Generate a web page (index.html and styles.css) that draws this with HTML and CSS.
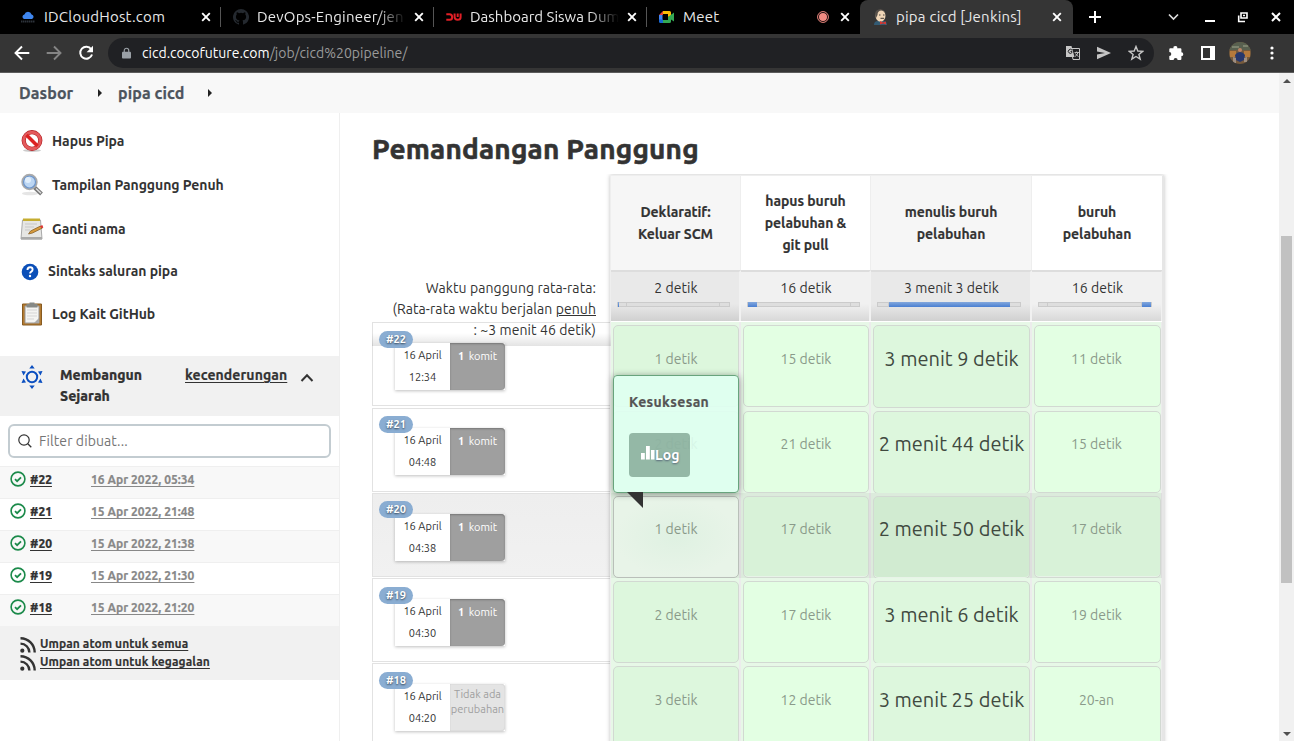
FILE: index.html
```html
<!DOCTYPE html>
<html lang="id">
<head>
<meta charset="utf-8">
<title>pipa cicd [Jenkins]</title>
<link rel="stylesheet" href="styles.css">
</head>
<body>
<svg class="defs" width="0" height="0">
  <symbol id="x" viewBox="0 0 10 10"><path d="M1.2 1.2l7.6 7.6M8.8 1.2L1.2 8.8" stroke="#fff" stroke-width="1.9" fill="none"/></symbol>
  <symbol id="ok" viewBox="0 0 16 16"><circle cx="8" cy="8" r="6.9" fill="none" stroke="#1b8a4a" stroke-width="1.6"/><path d="M5 8.2l2.1 2 3.900-3.900" fill="none" stroke="#1b8a4a" stroke-width="1.8"/></symbol>
  <symbol id="rss" viewBox="0 0 16 16"><circle cx="2.3" cy="13.7" r="2.1" fill="#333"/><path d="M.5 6.6A9 9 0 0 1 9.4 15.5M.5 1.3A14.2 14.2 0 0 1 14.7 15.5" fill="none" stroke="#333" stroke-width="2.4"/></symbol>
</svg>

<header class="tabs">
  <div class="tab">
    <svg class="fav" viewBox="0 0 16 16"><path d="M4 10a2.4 2.4 0 0 1 .4-4.6 3.8 3.8 0 0 1 7.2 0A2.4 2.4 0 0 1 12 10z" fill="#3f86ee"/><path d="M1 12.5h14" stroke="#2d333b" stroke-width="2" stroke-dasharray="1.5 .5"/></svg>
    <span class="tab-title t1">IDCloudHost.com</span><svg class="close"><use href="#x"/></svg>
  </div>
  <div class="tab">
    <svg class="fav" viewBox="0 0 16 16"><path fill="#24292f" d="M8 0a8 8 0 0 0-2.53 15.59c.4.07.55-.17.55-.38v-1.49c-2.23.48-2.7-.95-2.7-.95-.36-.92-.89-1.17-.89-1.17-.73-.5.05-.49.05-.49.81.06 1.23.83 1.23.83.72 1.23 1.88.87 2.34.67.07-.52.28-.88.51-1.08-1.78-.2-3.64-.89-3.64-3.95 0-.87.31-1.59.82-2.15-.08-.2-.36-1.02.08-2.12 0 0 .67-.21 2.2.82a7.6 7.6 0 0 1 4 0c1.53-1.04 2.2-.82 2.2-.82.44 1.1.16 1.92.08 2.12.51.56.82 1.27.82 2.15 0 3.07-1.87 3.75-3.65 3.95.29.25.54.73.54 1.48v2.2c0 .21.15.46.55.38A8 8 0 0 0 8 0z"/></svg>
    <span class="tab-title t2 fade">DevOps-Engineer/jen</span><svg class="close"><use href="#x"/></svg>
  </div>
  <div class="tab">
    <svg class="fav" viewBox="0 0 16 16"><path d="M.3 5.2h3.2a2.6 2.6 0 0 1 2.6 2.6v.8a2.2 2.2 0 0 1-2.2 2.2H.3M8.6 4.5v3.6c0 2 1 2.7 3 2.7s3-1 3-2.6V4.5M11.700 4.500V8" fill="none" stroke="#e01f26" stroke-width="2"/></svg>
    <span class="tab-title t3 fade">Dashboard Siswa Dum</span><svg class="close"><use href="#x"/></svg>
  </div>
  <div class="tab">
    <svg class="fav" viewBox="0 0 16 16"><path d="M0 6l4-4v4z" fill="#ea4335"/><path d="M4 2h6.500q1.500 0 1.500 1.500V7L9 8V5H4z" fill="#fbbc04"/><path d="M0 6h3.500v5H0z" fill="#4285f4"/><path d="M0 10.500h4V14H1.400Q0 14 0 12.500z" fill="#1967d2"/><path d="M4 11h5V8l6-4.600v9.200L12 10.500v2q0 1.500-1.500 1.500H4z" fill="#34a853"/></svg>
    <span class="tab-title t4">Meet</span>
    <svg class="rec" viewBox="0 0 12 12"><circle cx="6" cy="6" r="5.400" fill="none" stroke="#f28b82"/><circle cx="6" cy="6" r="4" fill="#f28b82"/></svg>
    <svg class="close"><use href="#x"/></svg>
  </div>
  <div class="tab active">
    <svg class="fav" viewBox="0 0 16 16"><path d="M1 16q0-4 4-4h5q4 0 4 4z" fill="#335b74"/><ellipse cx="7.500" cy="6.700" rx="5" ry="6" fill="#f0d6b7"/><path d="M3 9Q.5 2 5.500.5 11-.5 13 5q-2-3.500-4.500-3.500Q4.500 1.500 4.500 6z" fill="#554f49"/><path d="M6 6h1.500M10 6h1.500M7.500 9.300h3.500" stroke="#453e39" stroke-width="1"/><path d="M7 12l3 1.500 3-1v3l-3-1-3 1z" fill="#d33833"/></svg>
    <span class="tab-title t5">pipa cicd [Jenkins]</span><svg class="close"><use href="#x"/></svg>
  </div>
  <svg class="plus" viewBox="0 0 12 12"><path d="M6 0v12M0 6h12" stroke="#fff" stroke-width="2"/></svg>
  <div class="window-buttons">
    <svg width="12" height="12" viewBox="0 0 12 12"><path d="M1 3.500L5.500 8 10 3.500" fill="none" stroke="#ddd" stroke-width="1.700"/></svg>
    <svg width="12" height="12" viewBox="0 0 12 12"><path d="M3 10h10" stroke="#fff" stroke-width="2"/></svg>
    <svg width="12" height="12" viewBox="0 0 12 12"><path d="M5 2h6v5H5zM2.700 4.500v6H9" fill="none" stroke="#fff" stroke-width="1.600"/><path d="M7 3.800h2v1.500H7z" fill="#fff"/></svg>
    <svg width="12" height="12" viewBox="0 0 12 12"><path d="M2 2l8 8M10 2l-8 8" stroke="#fff" stroke-width="2"/></svg>
  </div>
</header>

<nav class="toolbar">
  <svg class="nav-icon" viewBox="0 0 16 16"><path d="M15.300 8H2M8 1.500L1.500 8 8 14.500" fill="none" stroke="#fff" stroke-width="1.900"/></svg>
  <svg class="nav-icon" viewBox="0 0 16 16"><path d="M.7 8H14M8 1.500L14.500 8 8 14.500" fill="none" stroke="#858585" stroke-width="1.900"/></svg>
  <svg class="nav-icon" viewBox="0 0 16 16"><path d="M13.200 4.300A6 6 0 1 0 14 9.500" fill="none" stroke="#fff" stroke-width="2"/><path d="M15 .8v6.400H8.600z" fill="#fff"/></svg>
  <div class="omnibox">
    <svg class="lock" viewBox="0 0 10 12"><path d="M1 4.500h8q1 0 1 1V11q0 1-1 1H1q-1 0-1-1V5.500q0-1 1-1z" fill="#9aa0a6"/><path d="M2.500 5V3.200a2.500 2.500 0 0 1 5 0V5" fill="none" stroke="#9aa0a6" stroke-width="1.300"/></svg>
    <span class="url">cicd.cocofuture.com<span>/job/cicd%20pipeline/</span></span>
    <svg width="14" height="14" viewBox="0 0 14 14"><path d="M5 2.500h8.500v11H7z" fill="none" stroke="#c7c7c7" stroke-width="1"/><path d="M0 0h5.500l3 11H0z" fill="#c7c7c7"/><path d="M6 4.200A2 2 0 1 0 6 6.500V5.600H4.500" fill="none" stroke="#202124" stroke-width="1"/><path d="M8.500 6.500H13M10.700 5.500v1M12 6.500q-1 3-3 4M9.500 7.500q1 2 3 3" fill="none" stroke="#c7c7c7" stroke-width=".9"/></svg>
    <svg width="14" height="14" viewBox="0 0 14 14"><path d="M0 .8L14 7 0 13.200V8.400L8 7 0 5.600z" fill="#c4c4c4"/></svg>
    <svg width="16" height="16" viewBox="0 0 16 16"><path d="M8 1.500l1.800 4.500 4.900.3-3.800 3.100 1.300 4.800L8 11.500l-4.200 2.700 1.300-4.800L1.300 6.300 6.200 6z" fill="none" stroke="#c7c7c7" stroke-width="1.400"/></svg>
  </div>
  <svg class="tool" viewBox="0 0 16 16"><path d="M2.300 3.300h3.200a1.900 1.900 0 1 1 3.700 0h3.200q1 0 1 1v3a1.900 1.900 0 1 1 0 3.800v3q0 1-1 1H9.600a2 2 0 1 0-4 0H2.300q-1 0-1-1V11a2 2 0 1 0 0-4V4.300q0-1 1-1z" fill="#fff"/></svg>
  <svg class="tool" viewBox="0 0 16 16"><path fill-rule="evenodd" d="M1 1h14v14H1zM3 3v10h7V3z" fill="#fff"/></svg>
  <svg class="avatar" viewBox="0 0 22 22"><clipPath id="round"><circle cx="11" cy="11" r="11"/></clipPath><g clip-path="url(#round)"><path d="M0 0h22v22H0z" fill="#765a3c"/><path d="M0 0h22v8H0z" fill="#58604f"/><path d="M3 4h7v2H3zM14 3h5v2h-5z" fill="#7c836e"/><path d="M1 9h6v6H1zM15 9h6v6h-6z" fill="#b5793c"/><circle cx="11" cy="8" r="2" fill="#bd8365"/><path d="M7 18l-1-5q2-3 5-3t5 3l-1 5-4 2z" fill="#26376d"/><path d="M4 15l3 1v5H4zM15 16l3-1v5h-3z" fill="#9d8d81"/></g></svg>
  <svg class="dots" viewBox="0 0 4 14"><circle cx="2" cy="2" r="1.600" fill="#fff"/><circle cx="2" cy="7" r="1.600" fill="#fff"/><circle cx="2" cy="12" r="1.600" fill="#fff"/></svg>
</nav>

<div class="viewport">
 <div class="page">
  <div class="breadcrumb"><span class="crumb c1">Dasbor</span><i></i><span class="crumb c2">pipa cicd</span><i></i></div>
  <div class="columns">
   <aside class="sidebar">
    <ul class="tasks">
      <li><svg width="24" height="24" viewBox="0 0 24 24"><ellipse cx="12" cy="21.500" rx="9" ry="1.500" fill="#ccc"/><circle cx="12" cy="11.500" r="8.300" fill="#fff" stroke="#b11e22" stroke-width="4.200"/><circle cx="12" cy="11.500" r="8.300" fill="none" stroke="#e35a5c" stroke-width="3"/><path d="M6.500 6l11 11" stroke="#d22" stroke-width="3.600"/></svg><span class="k1">Hapus Pipa</span></li>
      <li><svg width="24" height="24" viewBox="0 0 24 24"><ellipse cx="10" cy="20.500" rx="8" ry="1.800" fill="#e5e5e5"/><path d="M14 14l7.500 7" stroke="#777" stroke-width="4"/><path d="M16 15.500l5 4.800" stroke="#ddd" stroke-width="1.500"/><circle cx="9.500" cy="9" r="7.200" fill="#bcd6f3" stroke="#aaa" stroke-width="2"/><circle cx="9.500" cy="9" r="6" fill="none" stroke="#6d95cb" stroke-width="1.200"/><circle cx="8" cy="7" r="3" fill="#e1eefb"/></svg><span class="k2">Tampilan Panggung Penuh</span></li>
      <li><svg width="24" height="24" viewBox="0 0 24 24"><path d="M2.500 3h18l1.500 19H1z" fill="#e6e6e4" stroke="#aaa"/><path d="M1 20h21v2.500H1z" fill="#aaa"/><path d="M3 1.500h17V4H3z" fill="#c5ad31"/><path d="M5 7h12M5 10h9M5 13h5" stroke="#c7c7c7"/><path d="M8.500 17l2-3 10-5 2 2-10 5z" fill="#d69a3d" stroke="#80581f" stroke-width=".7"/><path d="M20 9.300l2.300-1.200 1 2.300-1.600.8z" fill="#d33"/></svg><span class="k3">Ganti nama</span></li>
      <li class="help"><svg width="18" height="18" viewBox="0 0 18 18"><circle cx="9" cy="9" r="8.300" fill="#0b4fb8"/><path d="M6.500 7q0-2.700 2.600-2.700 2.500 0 2.500 2.300 0 1.300-1.300 2-1.200.7-1.200 2" fill="none" stroke="#fff" stroke-width="1.900"/><circle cx="9" cy="13" r="1.200" fill="#fff"/></svg><span class="k4">Sintaks saluran pipa</span></li>
      <li><svg width="24" height="24" viewBox="0 0 24 24"><path d="M2.500 2h19v21h-19z" fill="#b47b30" stroke="#865a21"/><path d="M5 4h14v17H5z" fill="#f4f4f2" stroke="#999"/><path d="M7 8h10M7 11h10M7 14h10M7 17h7" stroke="#d5d5d5"/><path d="M6.500 2h3V.5h5V2h3v3.500h-11z" fill="#868986"/><path d="M19 16v5h-5z" fill="#aaa"/></svg><span class="k5">Log Kait GitHub</span></li>
    </ul>
    <section class="history">
      <div class="history-head">
        <svg width="24" height="24" viewBox="0 0 24 24"><circle cx="12" cy="12" r="5.200" fill="none" stroke="#0b4fc0" stroke-width="2"/><path d="M12 0l2.700 3.500H9.300zM12 24l2.700-3.500H9.300zM1.500 6l4.500.5-2.500 4zM22.500 6l-4.500.5 2.500 4zM1.500 18l4.500-.5-2.500-4zM22.500 18l-4.500-.5 2.500-4z" fill="#0b4fc0"/></svg>
        <strong>Membangun Sejarah</strong><a>kecenderungan</a>
        <svg class="chev" width="14" height="9" viewBox="0 0 14 9"><path d="M1.500 8L7 2.200 12.500 8" fill="none" stroke="#333" stroke-width="2"/></svg>
      </div>
      <div class="filter"><svg width="14" height="14" viewBox="0 0 14 14"><circle cx="6" cy="6" r="5.200" fill="none" stroke="#333" stroke-width="1.200"/><path d="M9.800 9.800l3.500 3.500" stroke="#333" stroke-width="1.300"/></svg><span>Filter dibuat...</span></div>
      <div class="build"><svg><use href="#ok"/></svg><b>#22</b><a>16 Apr 2022, 05:34</a></div>
      <div class="build"><svg><use href="#ok"/></svg><b>#21</b><a>15 Apr 2022, 21:48</a></div>
      <div class="build"><svg><use href="#ok"/></svg><b>#20</b><a>15 Apr 2022, 21:38</a></div>
      <div class="build"><svg><use href="#ok"/></svg><b>#19</b><a>15 Apr 2022, 21:30</a></div>
      <div class="build"><svg><use href="#ok"/></svg><b>#18</b><a>15 Apr 2022, 21:20</a></div>
      <div class="feeds">
        <div><svg><use href="#rss"/></svg><a>Umpan atom untuk semua</a></div>
        <div><svg><use href="#rss"/></svg><a class="f2">Umpan atom untuk kegagalan</a></div>
      </div>
    </section>
   </aside>
   <main class="content">
    <h1>Pemandangan Panggung</h1>
    <div class="stages">
      <div class="row head"><div></div><div class="th">Deklaratif:<br>Keluar SCM</div><div class="th">hapus buruh<br>pelabuhan &amp;<br>git pull</div><div class="th">menulis buruh<br>pelabuhan</div><div class="th">buruh<br>pelabuhan</div></div>
      <div class="row avg">
        <div class="avg-label"><p>Waktu panggung rata-rata:</p><p class="p2">(Rata-rata waktu berjalan <u>penuh</u></p><p class="p3">: ~3 menit 46 detik)</p></div>
        <div class="td"><span>2 detik</span><div class="bar"><i style="width:1%"></i><s style="width:7%"></s><s style="width:84%"></s></div></div>
        <div class="td"><span>16 detik</span><div class="bar"><i style="width:8%"></i><s style="width:85%"></s></div></div>
        <div class="td"><span>3 menit 3 detik</span><div class="bar"><s style="width:8%"></s><i style="width:85%"></i></div></div>
        <div class="td"><span>16 detik</span><div class="bar"><s style="width:8%"></s><s style="width:84%"></s><i style="width:8%"></i></div></div>
      </div>
      <div class="row run first"><div class="info"><span class="badge">#22</span><div class="meta"><div class="date">16 April<br>12:34</div><div class="commit"><b>1</b> komit</div></div></div><div class="td"><div class="card">1 detik</div></div><div class="td"><div class="card">15 detik</div></div><div class="td"><div class="card">3 menit 9 detik</div></div><div class="td"><div class="card">11 detik</div></div></div>
      <div class="row run second"><div class="info"><span class="badge">#21</span><div class="meta"><div class="date">16 April<br>04:48</div><div class="commit"><b>1</b> komit</div></div></div><div class="td"><div class="card">2 detik</div></div><div class="td"><div class="card">21 detik</div></div><div class="td"><div class="card">2 menit 44 detik</div></div><div class="td"><div class="card">15 detik</div></div></div>
      <div class="row run hover"><div class="info"><span class="badge">#20</span><div class="meta"><div class="date">16 April<br>04:38</div><div class="commit"><b>1</b> komit</div></div></div>
        <div class="td"><div class="card">1 detik</div>
          <div class="popup"><strong>Kesuksesan</strong><span class="log"><svg width="14" height="14" viewBox="0 0 14 14"><path d="M0 7h3.800v6.500H0zM5 0h3.800v13.500H5zM10 4h3.500v9.500H10z" fill="#fff"/></svg>Log</span></div>
        </div><div class="td"><div class="card">17 detik</div></div><div class="td"><div class="card">2 menit 50 detik</div></div><div class="td"><div class="card">17 detik</div></div></div>
      <div class="row run"><div class="info"><span class="badge">#19</span><div class="meta"><div class="date">16 April<br>04:30</div><div class="commit"><b>1</b> komit</div></div></div><div class="td"><div class="card">2 detik</div></div><div class="td"><div class="card">17 detik</div></div><div class="td"><div class="card">3 menit 6 detik</div></div><div class="td"><div class="card">19 detik</div></div></div>
      <div class="row run"><div class="info"><span class="badge">#18</span><div class="meta"><div class="date">16 April<br>04:20</div><div class="commit none">Tidak ada<br>perubahan</div></div></div><div class="td"><div class="card">3 detik</div></div><div class="td"><div class="card">12 detik</div></div><div class="td"><div class="card">3 menit 25 detik</div></div><div class="td"><div class="card">20-an</div></div></div>
    </div>
   </main>
  </div>
 </div>
 <div class="scrollbar"><i class="up"></i><div class="thumb"></div><i class="down"></i></div>
</div>
</body>
</html>
```
FILE: styles.css
```css
* { box-sizing: border-box; }
html, body { height: 100%; }
body { margin: 0; overflow: hidden; background: #fff; color: #333; font: 14px/22px Ubuntu, "Noto Sans", sans-serif; display: flex; flex-direction: column; white-space: nowrap; }
svg { flex: none; display: block; }
p, h1, ul { margin: 0; padding: 0; }
.defs { display: none; }

/* browser tabs */
.tabs { height: 34px; flex: none; background: #000; display: flex; align-items: center; padding-left: 8px; color: #e8e8e8; font-size: 15px; letter-spacing: .22px; }
.tab { width: 213px; height: 34px; display: flex; align-items: center; padding: 0 10px 0 12px; background: linear-gradient(#555, #555) right 7px / 1px 20px no-repeat; }
.tab:nth-child(4) { background: none; }
.tab.active { background: #353535; border-radius: 8px 8px 0 0; padding-left: 13px; padding-right: 11px; }
.fav { width: 16px; height: 16px; margin-right: 8px; }
.tab.active .fav { margin-right: 7px; }
.tab-title { flex: 1; overflow: hidden; }
.t2 { letter-spacing: .2px; }
.t3 { letter-spacing: 0; }
.fade { -webkit-mask-image: linear-gradient(90deg, #000 80%, transparent); mask-image: linear-gradient(90deg, #000 80%, transparent); margin-right: 8px; }
.close { width: 10px; height: 10px; }
.rec { width: 12px; height: 12px; margin-right: 11px; }
.plus { width: 12px; height: 12px; margin-left: 16px; }
.window-buttons { margin-left: auto; display: flex; gap: 22px; padding-right: 12px; }
.window-buttons svg { overflow: visible; }

/* address bar */
.toolbar { height: 39px; flex: none; background: #353535; border-bottom: 1px solid #5c5c5c; display: flex; align-items: center; padding-left: 14px; }
.nav-icon { width: 16px; height: 16px; margin-right: 16px; }
.nav-icon:nth-child(3) { margin-right: 14px; }
.omnibox { width: 1046px; height: 30px; border-radius: 15px; background: #202124; display: flex; align-items: center; gap: 17px; padding: 0 10px 0 14px; }
.lock { width: 9px; height: 12px; margin-right: -6px; }
.url { flex: 1; color: #fff; font-size: 14px; letter-spacing: .02px; }
.url span { color: #9a9a9a; }
.tool { width: 16px; height: 16px; margin-left: 14px; }
.tool + .tool { margin-left: 16px; }
.avatar { width: 22px; height: 22px; margin-left: 13px; }
.dots { width: 4px; height: 14px; margin-left: 19px; }

/* page frame */
.viewport { flex: 1; min-height: 0; display: flex; }
.page { flex: 1; min-width: 0; display: flex; flex-direction: column; overflow: hidden; }
.scrollbar { width: 15px; background: #f1f1f1; display: flex; flex-direction: column; align-items: center; padding: 6px 0 5px; }
.scrollbar i { border: 4px solid transparent; }
.up { border-top: 0 !important; border-bottom-color: #505050 !important; }
.down { border-bottom: 0 !important; border-top-color: #505050 !important; margin-top: auto; }
.thumb { width: 11px; height: 347px; background: #c1c1c1; margin-top: 153px; }
.breadcrumb { height: 40px; flex: none; background: #f8f8f8; display: flex; align-items: center; padding-left: 19px; font-size: 16px; font-weight: 600; color: #4d545d; letter-spacing: .1px; }
.crumb { -webkit-text-stroke: .25px; }
.breadcrumb i { border: 4px solid transparent; border-left-color: #222; border-right: 0; }
.c1 { width: 79px; }
.c2 { margin-left: 16px; width: 90px; }
.columns { display: flex; flex: 1; min-height: 0; }

/* sidebar */
.sidebar { width: 340px; flex: none; border-right: 1px solid #efefef; }
.tasks { list-style: none; padding: 6px 0 0 20px; height: 243px; }
.tasks li { display: flex; align-items: center; height: 44px; gap: 8px; font-weight: 600; letter-spacing: -.06px; }
.tasks span { margin-top: -1px; }
.tasks li.help { height: 41px; padding-left: 1px; gap: 9px; }
.history-head { height: 60px; background: #f1f1f1; display: flex; padding: 9px 0 0 20px; line-height: 21px; font-weight: 700; -webkit-text-stroke: .2px; }
.history-head strong { width: 90px; margin-left: 16px; white-space: normal; }
.history-head a { margin-left: 35px; width: 102px; letter-spacing: .1px; text-decoration: underline; text-underline-offset: 2px; }
.history-head .chev { margin: 8px 0 0 13px; }
.filter { width: 323px; height: 34px; margin: 8px; border: 2px solid #c3ccd1; border-radius: 6px; display: flex; align-items: center; gap: 7px; padding-left: 8px; color: #757575; letter-spacing: .1px; }
.build { height: 32px; border-top: 1px solid #efefef; display: flex; padding: 4px 0 0 10px; line-height: 18px; font-size: 12px; font-weight: 700; -webkit-text-stroke: .2px; }
.build:nth-child(odd) { background: #f8f8f8; }
.build svg { width: 16px; height: 16px; }
.build b { width: 61px; margin-left: 4px; }
.build b, .build a, .feeds a { text-decoration: underline; text-underline-offset: 2px; }
.build a { color: #888; letter-spacing: .04px; }
.feeds { height: 54px; background: #f1f1f1; padding: 9px 0 0 20px; font-size: 12px; line-height: 18px; font-weight: 600; letter-spacing: .08px; -webkit-text-stroke: .15px; }
.feeds div { display: flex; height: 18px; }
.feeds svg { width: 16px; height: 16px; margin: 2px 4px 0 0; }

/* stage view */
.content { padding: 20px 0 0 32px; }
h1 { font-size: 28px; line-height: 32px; height: 42px; letter-spacing: .18px; -webkit-text-stroke: .6px; }
.stages { position: relative; width: 792px; }
.stages::after { content: ""; position: absolute; left: 238px; right: 0; top: 0; bottom: 0; box-shadow: 0 0 4px rgba(0,0,0,.25); clip-path: inset(-1px -6px 0 -5px); border: 1px solid #eee; border-right: 2px solid #e6e6e6; pointer-events: none; z-index: 1; }
.row { display: grid; grid-template-columns: 239px 130px 130px 161px 131px; }
.head { height: 95px; padding-top: 1px; }
.th { display: flex; align-items: center; justify-content: center; text-align: center; font-weight: 700; border-right: 1px solid #eee; padding-bottom: 1px; letter-spacing: -.05px; -webkit-text-stroke: .15px; }
.th:nth-child(even) { background: #f6f6f6; }
.avg { height: 52px; }
.avg .td { border-top: 2px solid #ddd; border-right: 2px solid #f1f1f1; background: linear-gradient(#f1f1f1 65%, #d8d8d8); text-align: center; line-height: 21px; padding: 6px 9px 0 6px; height: 51px; }
.avg .td:nth-child(even) { background: linear-gradient(#e9e9e9 65%, #d0d0d0); }
.avg .td span { display: block; margin-right: -5px; letter-spacing: .05px; }
.bar { height: 5px; margin-top: 3px; background: #dedede; border: 1px solid #cbcbcb; display: flex; }
.bar i { background: linear-gradient(#83a8dd, #4a7fd2); height: 5px; margin-top: -1px; }
.bar s { border-right: 1px solid #cbcbcb; }
.avg-label { position: relative; z-index: 2; height: 76px; padding: 8px 15px 0 0; line-height: 21px; display: flex; flex-direction: column; align-items: flex-end; letter-spacing: .08px; background: linear-gradient(transparent 83%, rgba(0,0,0,.11)); }
.run { height: 85px; }
.run.first { height: 86px; }
.info { border: 1px solid #e2e2e2; border-right: 0; height: 84px; padding: 8px 0 0 6px; }
.second .info, .hover .info { padding-top: 7px; }
.badge { display: block; position: relative; z-index: 3; width: 34px; height: 17px; border-radius: 9px; background: #8aadd2; color: #fff; text-align: center; font-size: 11px; line-height: 17px; font-weight: 700; text-shadow: 0 1px 2px #345; }
.meta { position: relative; z-index: 2; display: flex; width: 110px; height: 47px; margin: -5px 0 0 16px; box-shadow: 0 1px 3px rgba(0,0,0,.25); font-size: 11px; }
.hover .meta { margin-top: -4px; }
.date { width: 55px; background: #fff; text-align: center; line-height: 22px; padding-top: 1px; }
.commit { width: 55px; background: #9f9f9f; color: #fff; border-radius: 0 4px 4px 0; padding: 5px 0 0 8px; line-height: 16px; box-shadow: inset 0 1px 2px #777; }
.commit b { margin-right: 2px; }
.commit.none { background: #e4e4e4; color: #a0a0a0; padding: 3px 0 0; text-align: center; line-height: 15px; box-shadow: inset 0 0 1px #aaa; }
.run .td { position: relative; background: #e7f8e7; border-right: 2px solid #ececec; border-bottom: 2px solid #ececec; padding: 3px 0 2px 2px; }
.card { height: 82px; background: #e3ffe3; border: 1px solid #d2d9d2; border-radius: 5px; text-align: center; padding-top: 22px; color: #8a9a8a; }
.run .td:nth-child(even) .card { background: #ddf7dd; }
.run .td:nth-child(4) .card { font-size: 20px; color: #40493f; height: 83px; }
.run .td:nth-child(5) .card { padding-right: 2px; }
.second .card, .hover .card { padding-top: 21px; }
.hover .info { background: linear-gradient(180deg, #eee, #f1f1f1); }
.hover .td { background: #dcebdc; border-color: #dedede; }
.hover .card { background: #d8f2d8; box-shadow: inset 0 -1px #e8f3e8; }
.run.hover .td:nth-child(4) .card { background: #d1ebd1; }
.run.hover .td:nth-child(2) .card { background: radial-gradient(#dff1e2, #e8f4e8 70%); border-color: #b9bfb9; }
.popup { position: absolute; z-index: 4; left: 2px; bottom: 88px; width: 126px; height: 118px; border: 1px solid #68a47d; border-radius: 4px; background: rgba(223,255,241,.9); box-shadow: 0 1px 7px rgba(0,0,0,.4); padding: 15px; color: #555; display: flex; flex-direction: column; align-items: flex-start; gap: 20px; }
.popup strong { letter-spacing: .35px; -webkit-text-stroke: .2px; }
.popup::after { content: ""; position: absolute; left: 13px; top: 116px; border: 8px solid #333; border-left-color: transparent; border-bottom-color: transparent; }
.log { width: 61px; height: 44px; border-radius: 4px; background: rgba(85,125,105,.55); color: #fff; font-weight: 700; display: flex; align-items: center; padding-left: 12px; text-shadow: 0 1px 2px #567; }
.log svg { margin-top: -4px; }
```
